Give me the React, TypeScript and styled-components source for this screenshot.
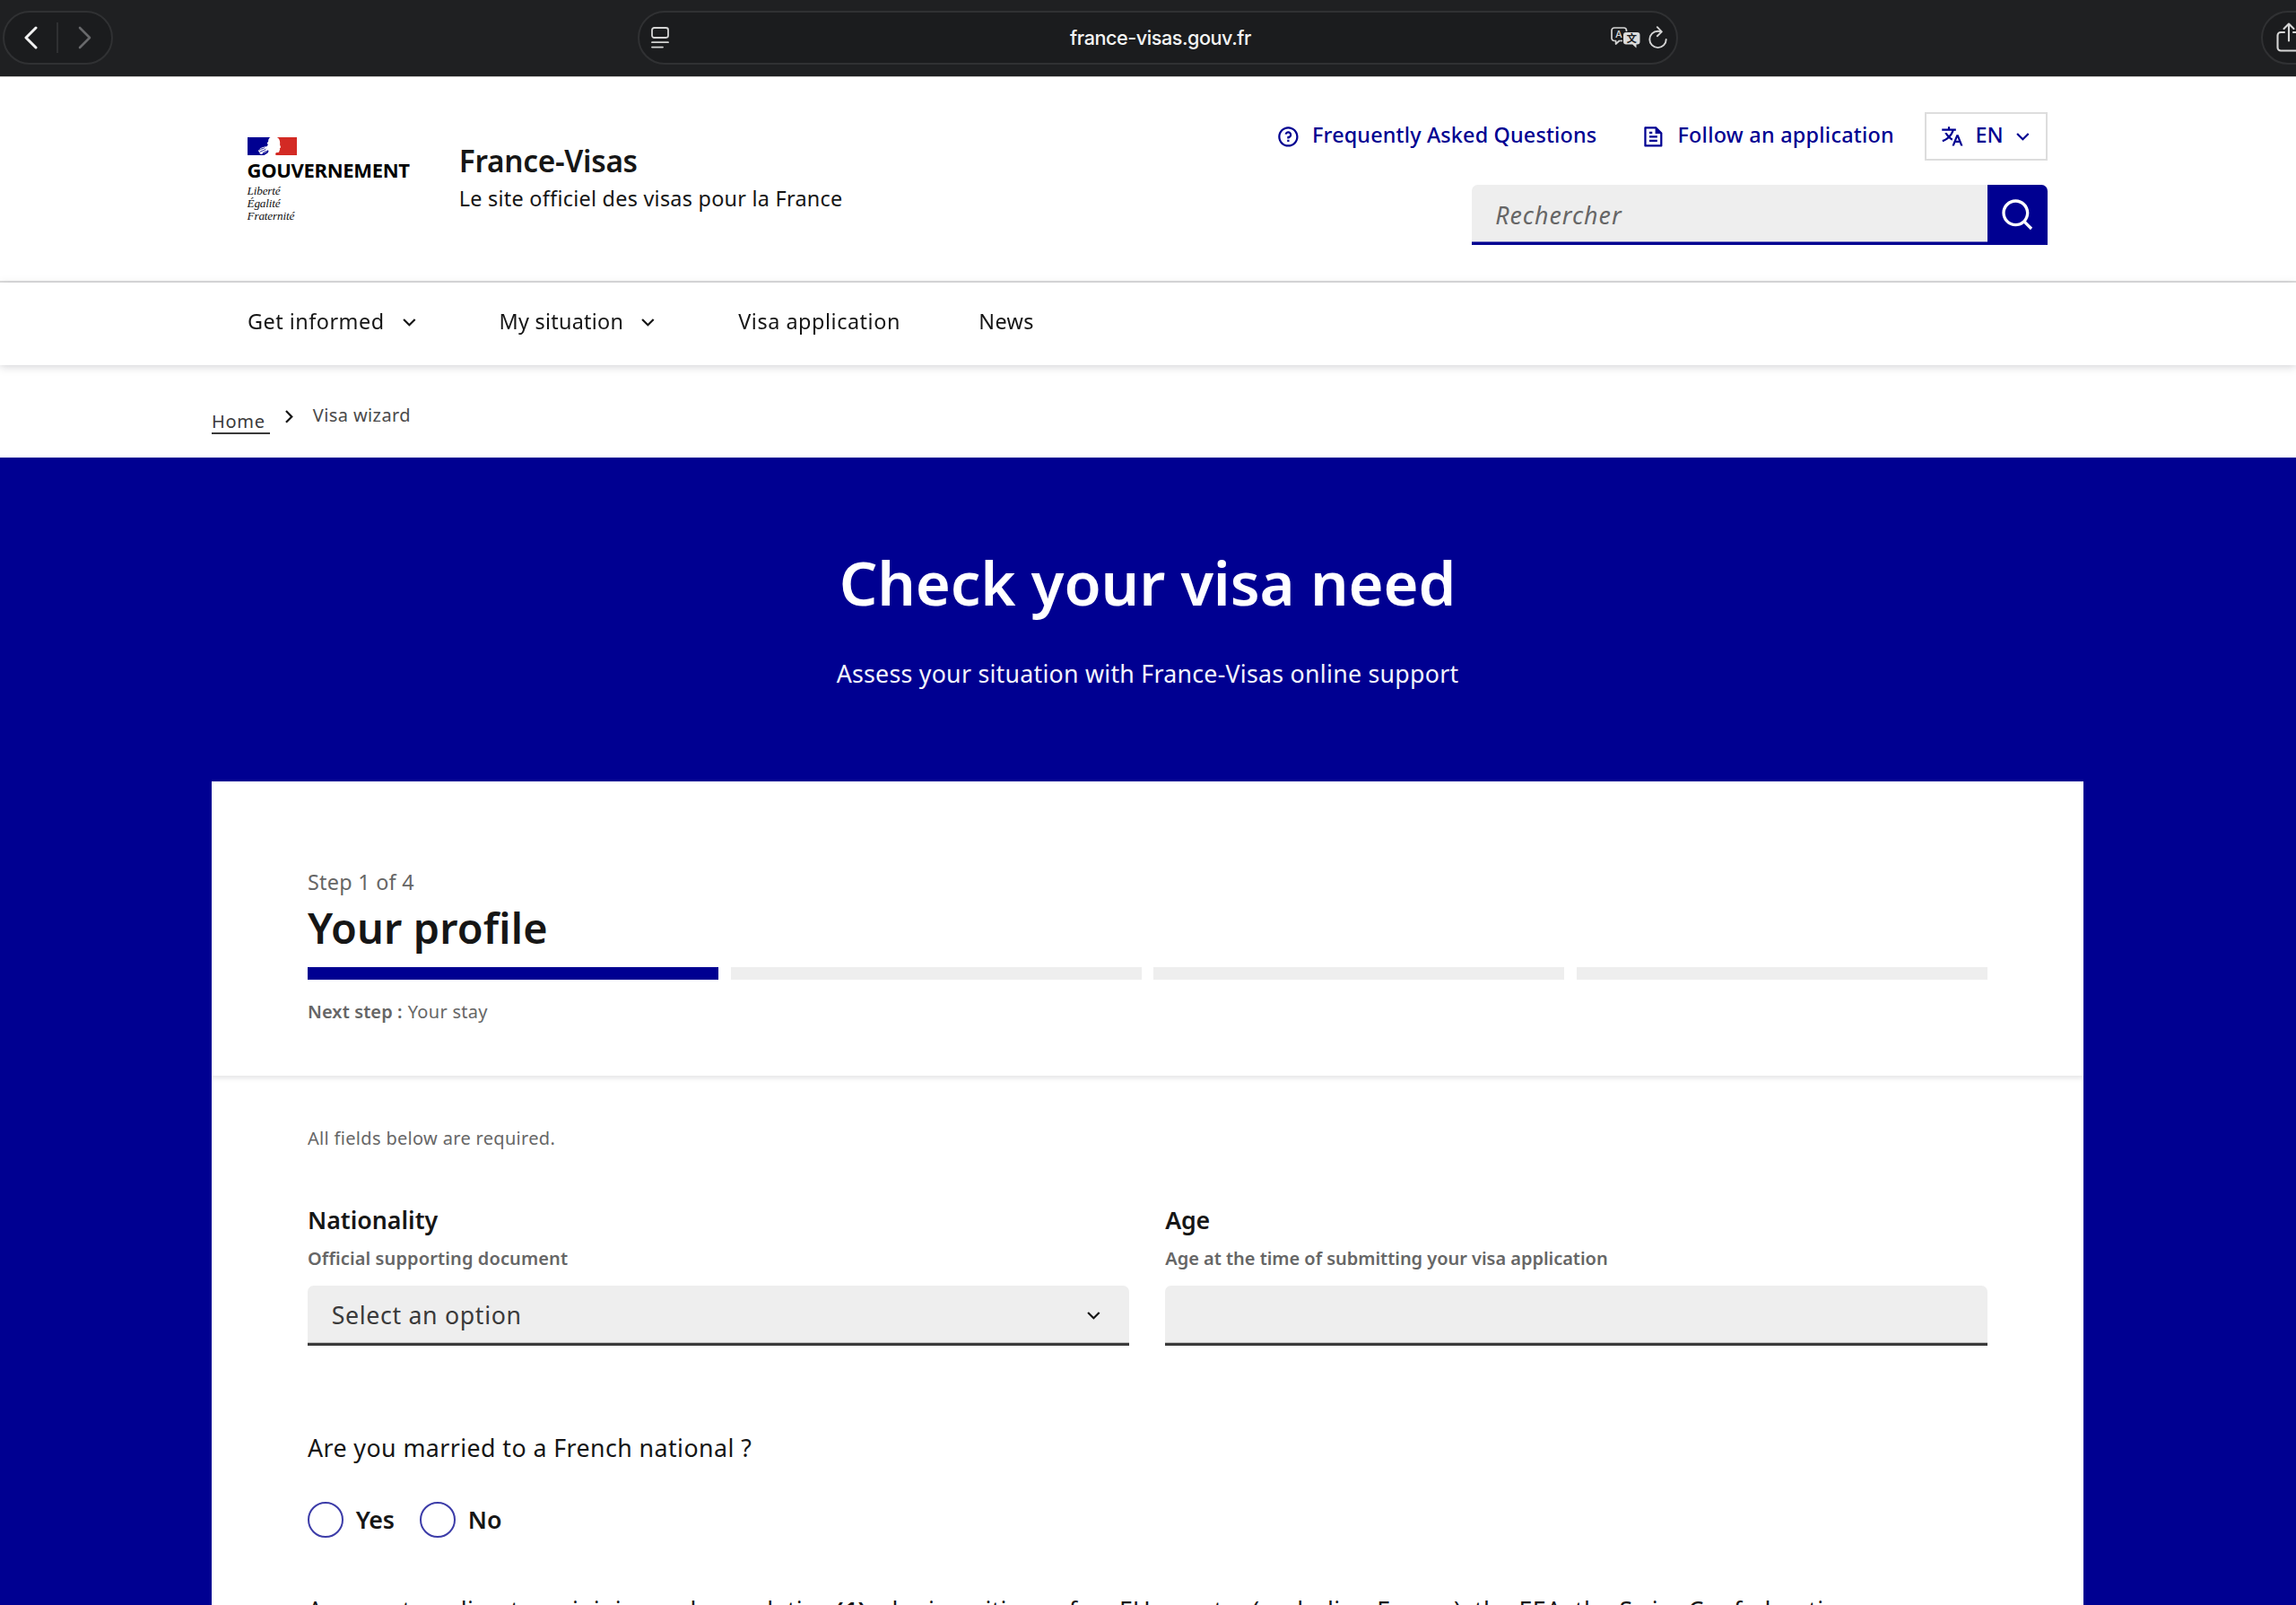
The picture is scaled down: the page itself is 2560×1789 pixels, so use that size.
import React from "react";
import styled, { createGlobalStyle } from "styled-components";
import {
  RiQuestionLine,
  RiFileTextLine,
  RiTranslate2,
  RiArrowDownSLine,
  RiArrowRightSLine,
  RiSearchLine,
} from "react-icons/ri";

const blue = "#000091";
const ink = "#161616";
const muted = "#666666";
const sans = `"Noto Sans", "Open Sans", sans-serif`;

const Global = createGlobalStyle`
  *, *::before, *::after { box-sizing: border-box; }
  html, body { margin: 0; background: #fff; }
  body { font-family: ${sans}; color: ${ink}; overflow: hidden; }
  h1, h2, p { margin: 0; }
  button, input { font-family: inherit; }
`;

const Page = styled.div`
  width: 2560px;
  height: 1789px;
  overflow: hidden;
  display: flex;
  flex-direction: column;
`;

const Text = styled.span<{
  $size: number;
  $line?: number;
  $weight?: number;
  $spacing?: number;
  $color?: string;
  $top?: number;
}>`
  display: block;
  white-space: nowrap;
  font-size: ${(p) => p.$size}px;
  line-height: ${(p) => p.$line ?? 40}px;
  font-weight: ${(p) => p.$weight ?? 400};
  letter-spacing: ${(p) => p.$spacing ?? 0}px;
  color: ${(p) => p.$color ?? ink};
  margin-top: ${(p) => p.$top ?? 0}px;
`;

/* Browser chrome */

const Chrome = styled.div`
  flex: none;
  height: 86px;
  padding: 12px 0 0 3px;
  display: flex;
  overflow: hidden;
  background: #1f2022;
  border-bottom: 1px solid #c9c6c5;
`;

const Pill = styled.div<{ $width: number; $gap?: number }>`
  flex: none;
  width: ${(p) => p.$width}px;
  height: 59.5px;
  margin-left: ${(p) => p.$gap ?? 0}px;
  border: 2px solid #303133;
  border-radius: 30px;
  background: #1b1c1e;
  display: flex;
  align-items: center;
`;

const NavPill = styled(Pill)`
  justify-content: space-between;
  padding: 0 22px 0 22px;
`;

const PillDivider = styled.div`
  width: 2px;
  height: 34px;
  background: #2f3032;
`;

const AddressPill = styled(Pill)`
  padding: 0 10px 0 13px;
`;

const Address = styled.div`
  flex: 1;
  padding-left: 46px;
  text-align: center;
  color: #f4f4f4;
  font: 500 21.6px/28px Inter, "Liberation Sans", sans-serif;
  letter-spacing: -0.45px;
`;

const AddressTools = styled.div`
  display: flex;
  align-items: center;
  gap: 9px;
`;

const SharePill = styled(Pill)`
  padding-left: 15px;
`;

/* Site header */

const Header = styled.header`
  flex: none;
  height: 229px;
  padding: 0 277.5px 0 275.5px;
  display: flex;
  justify-content: space-between;
  border-bottom: 2px solid #dddddd;
`;

const Brand = styled.div`
  display: flex;
`;

const Logo = styled.div`
  width: 236.3px;
  padding-top: 66.7px;
`;

const Motto = styled.div`
  margin-top: 4.8px;
  color: #111;
  font: italic 13.2px/13.8px "Liberation Serif", serif;
  letter-spacing: -0.15px;
`;

const Service = styled.div`
  padding-top: 72.5px;
`;

const Tools = styled.div`
  padding-top: 39px;
  display: flex;
  flex-direction: column;
  align-items: flex-end;
`;

const ToolRow = styled.div`
  display: flex;
  align-items: center;
  color: ${blue};
`;

const ToolLink = styled.a<{ $after: number }>`
  display: flex;
  align-items: center;
  gap: 13.4px;
  margin-right: ${(p) => p.$after}px;

  ${Text} {
    padding-bottom: 3.6px;
  }
`;

const LanguageButton = styled.button`
  width: 136.5px;
  height: 54px;
  padding: 0 11.5px 0 15px;
  display: flex;
  align-items: center;
  border: 2px solid #dddddd;
  background: #fff;
  color: ${blue};

  ${Text} {
    margin: 0 auto 0 12.8px;
    padding-bottom: 3.6px;
  }
`;

const Search = styled.div`
  width: 642px;
  height: 67px;
  margin-top: 26.5px;
  display: flex;
  border-radius: 6.7px 6.7px 0 0;
  overflow: hidden;
`;

const SearchInput = styled.input`
  flex: 1;
  min-width: 0;
  border: 0;
  outline: 0;
  padding: 0 26.7px;
  background: #eeeeee;
  box-shadow: inset 0 -3.4px 0 ${blue};
  font-size: 26.75px;
  letter-spacing: 1px;

  &::placeholder {
    color: ${muted};
    opacity: 1;
    font-style: italic;
  }
`;

const SearchButton = styled.button`
  width: 67px;
  border: 0;
  padding: 0;
  display: grid;
  place-items: center;
  background: ${blue};
  color: #fff;
`;

const Nav = styled.nav`
  flex: none;
  position: relative;
  height: 91.5px;
  padding: 22.6px 0 0 276px;
  display: flex;
  align-items: flex-start;
  gap: 87.3px;
  background: #fff;
  filter: drop-shadow(0 2px 5px rgba(0, 0, 18, 0.17));
`;

const NavItem = styled.a`
  display: flex;
  align-items: center;
  gap: 14px;

  svg {
    margin-top: 3px;
  }
`;

const Breadcrumb = styled.div`
  flex: none;
  height: 103.5px;
  padding: 44px 0 0 236px;
  display: flex;
  align-items: flex-start;

  svg {
    margin: 0.5px 13.5px 0 7.5px;
  }
`;

const Home = styled(Text)`
  width: 65px;
  border-bottom: 2px solid #3a3a3a;
`;

/* Wizard */

const Hero = styled.main`
  flex: 1;
  min-height: 0;
  padding: 98.6px 237px 0 236px;
  display: flex;
  flex-direction: column;
  align-items: center;
  background: ${blue};
`;

const Card = styled.section`
  flex: none;
  width: 100%;
  height: 1000px;
  margin-top: 100.1px;
  background: #fff;
`;

const Stepper = styled.div`
  height: 328px;
  padding: 93.8px 107.4px 0 107px;
  box-shadow: 0 3px 5px rgba(0, 0, 18, 0.1);
  clip-path: inset(0 0 -14px 0);
`;

const Steps = styled.div`
  display: grid;
  grid-template-columns: repeat(4, 1fr);
  gap: 13.4px;
  margin-top: 16px;
`;

const StepBar = styled.div<{ $active?: boolean }>`
  height: 13.4px;
  background: ${(p) => (p.$active ? blue : "#eeeeee")};
`;

const NextStep = styled.div`
  display: flex;
  gap: 6px;
  margin-top: 20.8px;
`;

const Form = styled.div`
  padding: 54.2px 107.4px 0 107px;
`;

const Fields = styled.div`
  display: grid;
  grid-template-columns: 1fr 1fr;
  gap: 40px;
  margin-top: 54.5px;
`;

const Control = styled.div`
  height: 67px;
  margin-top: 14px;
  padding: 0 26.7px;
  display: flex;
  align-items: center;
  justify-content: space-between;
  border-radius: 6.7px 6.7px 0 0;
  background: #eeeeee;
  box-shadow: inset 0 -3.2px 0 #3a3a3a;
`;

const Radios = styled.div`
  display: flex;
  gap: 28.5px;
  margin-top: 39.5px;
`;

const RadioLabel = styled.label`
  display: flex;
  align-items: center;
  gap: 13.8px;
`;

const RadioMark = styled.span`
  width: 40px;
  height: 40px;
  border: 2px solid #3c3ca8;
  border-radius: 50%;
`;

const Flag = () => (
  <svg width="55.5" height="20" viewBox="0 0 55.5 20" style={{ display: "block" }}>
    <rect width="55.5" height="20" fill="#fff" />
    <path d="M0 0H25.5C23.6 1 23 2.6 23.200 4.600L21.800 6.600 22.800 8.400 21.400 10.200 19 10.600 14.500 12 12 15 14 18.500 18.400 20H0Z" fill={blue} />
    <path d="M13 20L18.500 20 22.500 17.600 23.600 15.200 22.200 14.200 20.600 16.600 16.500 18.600Z" fill={blue} />
    <path d="M32.800 0H55.500V20H31.600C30.800 18.400 31.200 17.200 32.600 17 34.600 17 35.600 16.600 35.400 15.200L36.200 13.600 35.800 12.400 37 11.200C37 10.200 36.200 9.200 36 8 36.600 5 35.800 1.400 32.800 0Z" fill="#d32a24" />
    <g fill="none" stroke={blue} strokeWidth="0.9">
      <path d="M13 14.400C15 12.200 17 13.400 19 11.600M13.600 16.600C15.600 14.600 17.600 15.800 20.400 13M17 17.600C18.600 17 19.600 16.400 20.600 15" />
    </g>
  </svg>
);

const BackIcon = () => (
  <svg width="15" height="26" viewBox="0 0 15 26" fill="none" stroke="#f2f2f2" strokeWidth="3" strokeLinecap="round" strokeLinejoin="round">
    <path d="M13 2L2 13L13 24" />
  </svg>
);

const ForwardIcon = () => (
  <svg width="15" height="26" viewBox="0 0 15 26" fill="none" stroke="#68696b" strokeWidth="2.6" strokeLinecap="round" strokeLinejoin="round">
    <path d="M2 2L13 13L2 24" />
  </svg>
);

const ReaderIcon = () => (
  <svg width="20" height="24" viewBox="0 0 20 24" fill="none" stroke="#d4d4d4" strokeWidth="1.8" strokeLinecap="round">
    <rect x="1" y="1" width="18" height="11" rx="2.4" />
    <path d="M1 17.2H19M1 22.6H13" />
  </svg>
);

const TranslateIcon = () => (
  <svg width="33" height="24" viewBox="0 0 33 24">
    <path d="M13 15.5H9.4L5.6 19V15.5H4A3 3 0 0 1 1 12.500V4A3 3 0 0 1 4 1H14.500A3 3 0 0 1 17.500 4V5" fill="none" stroke="#d4d4d4" strokeWidth="1.7" strokeLinejoin="round" />
    <text x="9" y="12.4" textAnchor="middle" fontFamily="Inter, sans-serif" fontWeight="500" fontSize="11" fill="#d4d4d4">A</text>
    <path d="M17 6H29.500A3 3 0 0 1 32.500 9V16.500A3 3 0 0 1 29.500 19.500H28.500V23.600L24.200 19.500H17A3 3 0 0 1 14 16.500V9A3 3 0 0 1 17 6Z" fill="#dcdcdc" />
    <text x="23.2" y="17" textAnchor="middle" fontFamily="'Noto Sans CJK SC', sans-serif" fontWeight="700" fontSize="11.5" fill="#1b1c1e">文</text>
  </svg>
);

const ReloadIcon = () => (
  <svg width="21" height="26" viewBox="0 0 21 26" fill="none" stroke="#d4d4d4" strokeWidth="1.9" strokeLinecap="round" strokeLinejoin="round">
    <path d="M14.200 6.400C13 5.900 11.800 5.700 10.500 5.700A9.200 9.200 0 1 0 19.700 14.900" />
    <path d="M9.800 1.200L14.800 6.400L9.800 11.200" />
  </svg>
);

const ShareIcon = () => (
  <svg width="28" height="33" viewBox="0 0 28 33" fill="none" stroke="#d6d6d6" strokeWidth="2.1" strokeLinecap="round" strokeLinejoin="round">
    <path d="M9 11H5A3.500 3.500 0 0 0 1.500 14.500V28A3.500 3.500 0 0 0 5 31.500H23A3.500 3.500 0 0 0 26.500 28V14.500A3.500 3.500 0 0 0 23 11H19" />
    <path d="M14 20.500V1.500M8.500 7L14 1.500L19.500 7" />
  </svg>
);

export default function App() {
  return (
    <Page>
      <Global />
      <Chrome>
        <NavPill $width={122.5}>
          <BackIcon />
          <PillDivider />
          <ForwardIcon />
        </NavPill>
        <AddressPill $width={1160} $gap={585.5}>
          <ReaderIcon />
          <Address>france-visas.gouv.fr</Address>
          <AddressTools>
            <TranslateIcon />
            <ReloadIcon />
          </AddressTools>
        </AddressPill>
        <SharePill $width={118} $gap={649.5}>
          <ShareIcon />
        </SharePill>
      </Chrome>

      <Header>
        <Brand>
          <Logo>
            <Flag />
            <Text $size={22} $line={24} $weight={700} $top={4.6} $spacing={-0.3} $color="#000">GOUVERNEMENT</Text>
            <Motto>
              Liberté
              <br />
              Égalité
              <br />
              Fraternité
            </Motto>
          </Logo>
          <Service>
            <Text $size={33.4} $weight={600} $spacing={-0.3}>France-Visas</Text>
            <Text $size={23.4} $line={34} $top={5} $spacing={0.26}>Le site officiel des visas pour la France</Text>
          </Service>
        </Brand>
        <Tools>
          <ToolRow>
            <ToolLink $after={50}>
              <RiQuestionLine size={26.75} />
              <Text $size={23.4} $weight={500} $spacing={0.15} $color={blue}>Frequently Asked Questions</Text>
            </ToolLink>
            <ToolLink $after={34}>
              <RiFileTextLine size={26.75} />
              <Text $size={23.4} $weight={500} $spacing={0.25} $color={blue}>Follow an application</Text>
            </ToolLink>
            <LanguageButton>
              <RiTranslate2 size={26.75} />
              <Text $size={23.4} $weight={500} $color={blue}>EN</Text>
              <RiArrowDownSLine size={26.75} />
            </LanguageButton>
          </ToolRow>
          <Search>
            <SearchInput placeholder="Rechercher" />
            <SearchButton>
              <RiSearchLine size={40} />
            </SearchButton>
          </Search>
        </Tools>
      </Header>

      <Nav>
        <NavItem>
          <Text $size={23.4} $spacing={0.5}>Get informed</Text>
          <RiArrowDownSLine size={26.75} />
        </NavItem>
        <NavItem>
          <Text $size={23.4} $spacing={0.25}>My situation</Text>
          <RiArrowDownSLine size={26.75} />
        </NavItem>
        <NavItem>
          <Text $size={23.4} $spacing={0.55}>Visa application</Text>
        </NavItem>
        <NavItem>
          <Text $size={23.4} $spacing={0.4}>News</Text>
        </NavItem>
      </Nav>

      <Breadcrumb>
        <Home $size={20} $line={24} $top={7} $spacing={0.7} $color="#3a3a3a">Home</Home>
        <RiArrowRightSLine size={26.75} />
        <Text $size={20} $line={24} $spacing={0.4} $color="#4a4a4a">Visa wizard</Text>
      </Breadcrumb>

      <Hero>
        <Text as="h1" $size={66.9} $line={80} $weight={600} $spacing={-0.1} $color="#fff">Check your visa need</Text>
        <Text as="p" $size={26.75} $top={42.3} $spacing={0.25} $color="#f5f5fe">
          Assess your situation with France-Visas online support
        </Text>
        <Card>
          <Stepper>
            <Text $size={23.4} $line={36} $spacing={0.25} $color={muted}>Step 1 of 4</Text>
            <Text as="h2" $size={46.8} $line={56} $weight={600} $top={5.5} $spacing={0.15}>Your profile</Text>
            <Steps>
              <StepBar $active />
              <StepBar />
              <StepBar />
              <StepBar />
            </Steps>
            <NextStep>
              <Text $size={20} $line={32} $weight={600} $spacing={0.1} $color={muted}>Next step :</Text>
              <Text $size={20} $line={32} $spacing={0.3} $color={muted}>Your stay</Text>
            </NextStep>
          </Stepper>
          <Form>
            <Text $size={20} $line={32} $spacing={0.32} $color={muted}>All fields below are required.</Text>
            <Fields>
              <div>
                <Text $size={26.75} $weight={600}>Nationality</Text>
                <Text $size={20} $line={32} $weight={600} $top={7} $spacing={0.12} $color={muted}>Official supporting document</Text>
                <Control>
                  <Text $size={26.75} $spacing={0.65} $color="#3a3a3a">Select an option</Text>
                  <RiArrowDownSLine size={26.75} />
                </Control>
              </div>
              <div>
                <Text $size={26.75} $weight={600} $spacing={-0.3}>Age</Text>
                <Text $size={20} $line={32} $weight={600} $top={7} $spacing={-0.03} $color={muted}>
                  Age at the time of submitting your visa application
                </Text>
                <Control />
              </div>
            </Fields>
            <Text $size={26.75} $top={94.4} $spacing={0.43}>Are you married to a French national ?</Text>
            <Radios>
              <RadioLabel>
                <RadioMark />
                <Text $size={26.75} $weight={600} $spacing={-0.3}>Yes</Text>
              </RadioLabel>
              <RadioLabel>
                <RadioMark />
                <Text $size={26.75} $weight={600}>No</Text>
              </RadioLabel>
            </Radios>
            <Text $size={26.75} $top={61} $spacing={0.31}>
              Are you traveling to or joining a close relative <b>(1)</b> who is a citizen of an EU country (excluding France), the EEA, the Swiss Confederation
            </Text>
          </Form>
        </Card>
      </Hero>
    </Page>
  );
}
